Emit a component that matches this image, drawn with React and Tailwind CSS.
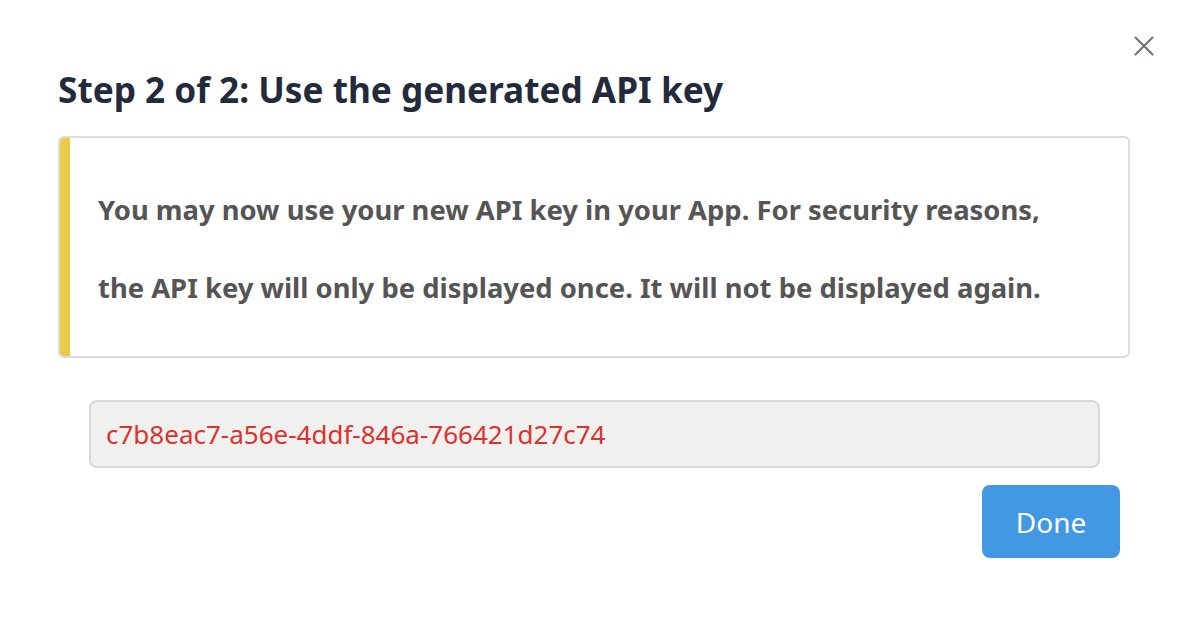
export default function App() {
  return (
    <div className="w-[1190px] h-[624px] bg-white relative" style={{ fontFamily: '"Noto Sans", "Open Sans", sans-serif' }}>
      <button className="absolute left-[1134px] top-[36px] w-[20px] h-[20px]">
        <svg width="20" height="20" viewBox="0 0 20 20" fill="none" stroke="#6b6e76" strokeWidth="2" strokeLinecap="round">
          <path d="M1.5 1.5L18.5 18.5M18.5 1.5L1.5 18.5" />
        </svg>
      </button>
      <div className="pl-[58px] pr-[60px] pt-[63px]">
        <h1 className="text-[35.2px] leading-[52px] font-bold text-[#232a3b] m-0">Step 2 of 2: Use the generated API key</h1>
        <div className="mt-[21px] flex border-[2px] border-[#dcdcdc] rounded-[6px] overflow-hidden h-[222px]">
          <div className="w-[12px] bg-[#e8cc49] shrink-0 -ml-[2px] -my-[2px]"></div>
          <p className="pl-[28px] pt-[33px] text-[27.4px] leading-[78px] font-bold text-[#555555] whitespace-nowrap">
            You may now use your new API key in your App. For security reasons,<br />
            the API key will only be displayed once. It will not be displayed again.
          </p>
        </div>
        <div className="ml-[31px] mr-[30px] mt-[42px] h-[68px] bg-[#f0f0ef] border-[2px] border-[#d8d8d8] rounded-[8px] flex items-center pl-[15px] text-[26px] text-[#d8332f]">
          c7b8eac7-a56e-4ddf-846a-766421d27c74
        </div>
        <div className="flex justify-end mr-[10px] mt-[17px]">
          <button className="w-[138px] h-[73px] bg-[#4298e2] rounded-[8px] text-white text-[28px] flex items-center justify-center">Done</button>
        </div>
      </div>
    </div>
  );
}
